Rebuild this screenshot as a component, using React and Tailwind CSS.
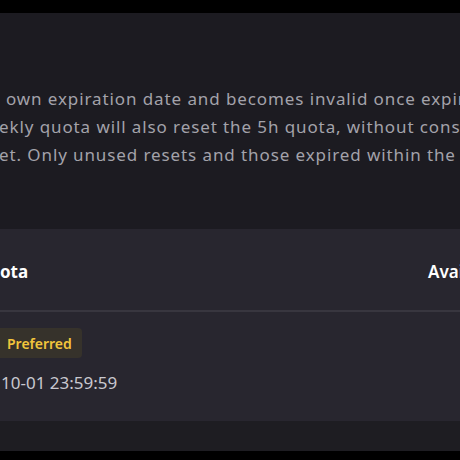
export default function App() {
  const body = { fontFamily: '"Noto Sans", "Open Sans", sans-serif' };

  return (
    <div className="w-[460px] h-[460px] overflow-hidden bg-black flex flex-col">
      <div className="h-[13px] shrink-0 bg-black" />

      {/* notice text */}
      <section className="h-[216px] shrink-0 bg-[#1c1b21] pt-[72px] overflow-hidden">
        <div
          className="text-[17px] leading-[28px] text-[#a3a2aa] whitespace-nowrap tracking-[0.9px]"
          style={body}
        >
          <p className="pl-[6px]">own expiration date and becomes invalid once expired.</p>
          <p className="-ml-[1px]">ekly quota will also reset the 5h quota, without consuming a 5h reset.</p>
          <p className="-ml-[1px]">et. Only unused resets and those expired within the past 7 days are shown.</p>
        </div>
      </section>

      {/* table card */}
      <section className="h-[192px] shrink-0 bg-[#28262f] flex flex-col">
        <div className="h-[83px] pt-[4px] flex items-center border-b-2 border-[#38363f] overflow-hidden whitespace-nowrap">
          <span className="w-[428px] shrink-0 text-[17px] font-bold text-white" style={body}>ota</span>
          <span className="shrink-0 text-[17px] font-semibold text-white" style={body}>Available</span>
        </div>
        <div className="flex flex-col items-start pt-[16px]">
          <span
            className="h-[30px] flex items-center pl-[7px] pr-[10px] bg-[#36322b] rounded-r text-[14px] font-semibold text-[#f2c53c]"
            style={body}
          >
            Preferred
          </span>
          <span className="mt-[12px] ml-[1px] text-[17px] text-[#c9c8cf]" style={body}>
            10-01 23:59:59
          </span>
        </div>
      </section>

      <div className="h-[30px] shrink-0 bg-[#1e1d22]" />
    </div>
  );
}
